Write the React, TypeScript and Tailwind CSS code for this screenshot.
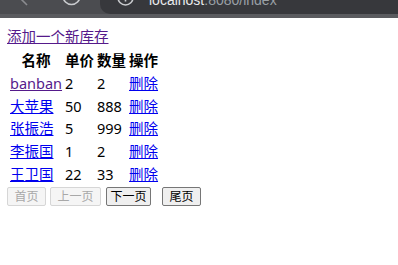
const rows = [
  { name: 'banban', price: '2', qty: '2', visited: true },
  { name: '大苹果', price: '50', qty: '888' },
  { name: '张振浩', price: '5', qty: '999' },
  { name: '李振国', price: '1', qty: '2' },
  { name: '王卫国', price: '22', qty: '33' },
]

const font = { fontFamily: '"Noto Sans", "Noto Sans CJK SC", sans-serif' }

function TopBar() {
  return (
    <div className="flex h-[18px] flex-col bg-[#5a5b5f]">
      <div className="flex h-[14px] overflow-hidden bg-[#4b4c50]">
        <svg className="ml-[14px] h-[14px] w-[16px]" viewBox="14 0 16 14">
          <path d="M16 -6 L27 5" stroke="#8b8c90" strokeWidth="1.6" fill="none" />
        </svg>
        <svg className="ml-[30px] h-[14px] w-[24px]" viewBox="60 0 24 14">
          <circle cx="71.5" cy="-4" r="8.5" stroke="#c9cbce" strokeWidth="1.7" fill="none" />
        </svg>
        <div className="ml-[16px] flex flex-1 items-start rounded-bl-[10px] bg-[#37383c]">
          <svg className="ml-[14px] h-[14px] w-[24px] shrink-0" viewBox="114 0 24 14">
            <circle cx="125.5" cy="-2.5" r="7.5" stroke="#c9cbce" strokeWidth="1.6" fill="none" />
            <path d="M125.5 -3 L125.5 1.5" stroke="#c9cbce" strokeWidth="1.6" />
          </svg>
          <div
            className="ml-[11px] mt-[-7px] whitespace-nowrap text-[14px] leading-[14px]"
            style={{ fontFamily: '"Liberation Sans", Arial, sans-serif' }}
          >
            <span className="text-[#e8eaed]">localhost</span>
            <span className="text-[#9aa0a6]">:8080/index</span>
          </div>
        </div>
      </div>
    </div>
  )
}

export default function App() {
  return (
    <div className="h-[265px] w-[398px] overflow-hidden bg-white text-black">
      <TopBar />
      <div className="px-[7px] pt-[9px] text-[14.5px]" style={font}>
        <div className="leading-[19px]">
          <a href="#" className="text-[#551a8b] underline">
            添加一个新库存
          </a>
        </div>
        <table className="mt-[2px] border-separate border-spacing-[2px] leading-[18.8px]">
          <thead>
            <tr>
              {['名称', '单价', '数量', '操作'].map((h) => (
                <th key={h} className="py-[1px] pl-[1px] pr-0 text-center font-bold">
                  {h}
                </th>
              ))}
            </tr>
          </thead>
          <tbody>
            {rows.map((r) => (
              <tr key={r.name}>
                <td className="py-[1px] pl-[1px] pr-0">
                  <a
                    href="#"
                    className={`underline ${r.visited ? 'text-[#551a8b]' : 'text-[#0000ee]'}`}
                  >
                    {r.name}
                  </a>
                </td>
                <td className="py-[1px] pl-[1px] pr-0">{r.price}</td>
                <td className="py-[1px] pl-[1px] pr-0">{r.qty}</td>
                <td className="py-[1px] pl-[1px] pr-0">
                  <a href="#" className="text-[#0000ee] underline">
                    删除
                  </a>
                </td>
              </tr>
            ))}
          </tbody>
        </table>
        <div className="flex text-[12px] leading-[15px]">
          <button
            disabled
            className="h-[19px] w-[39px] rounded-[2px] border border-[#d6d6d6] bg-[#f5f5f5] text-[#a8a8a8]"
          >
            首页
          </button>
          <button
            disabled
            className="ml-[4px] h-[19px] w-[51px] rounded-[2px] border border-[#d6d6d6] bg-[#f5f5f5] text-[#a8a8a8]"
          >
            上一页
          </button>
          <button className="ml-[5px] h-[19px] w-[45px] rounded-[2px] border border-[#767676] bg-[#efefef] text-black">
            下一页
          </button>
          <button className="ml-[11px] h-[19px] w-[39px] rounded-[2px] border border-[#767676] bg-[#efefef] text-black">
            尾页
          </button>
        </div>
      </div>
    </div>
  )
}
